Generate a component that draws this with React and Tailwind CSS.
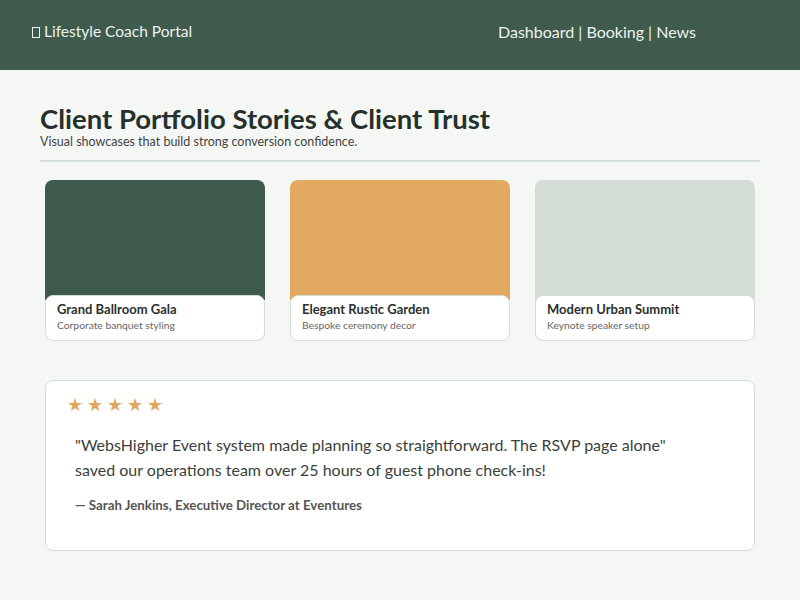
const showcases = [
  { title: "Grand Ballroom Gala", note: "Corporate banquet styling", swatch: "bg-[#3e5a4c]" },
  { title: "Elegant Rustic Garden", note: "Bespoke ceremony decor", swatch: "bg-[#e2aa60]" },
  { title: "Modern Urban Summit", note: "Keynote speaker setup", swatch: "bg-[#d3ddd5]" },
];

function ShowcaseCard({ title, note, swatch }) {
  return (
    <div className="flex flex-col">
      <div className={`h-[120px] rounded-t-lg ${swatch}`} />
      <div className="-mt-[5px] bg-white border border-[#d3ddd6] rounded-lg px-[11px] pt-[4px] pb-[8px]">
        <h3 className="text-[13px] font-bold text-[#2b302d] leading-[18px]">{title}</h3>
        <p className="text-[10.3px] text-[#666] leading-[14px]">{note}</p>
      </div>
    </div>
  );
}

export default function App() {
  return (
    <div className="min-h-[600px] bg-[#f5f7f5] font-['Lato',sans-serif]">
      <header className="h-[70px] bg-[#3f5b4d] flex items-center justify-between pl-8 pr-[104px] pb-[6px] text-[#eef2ef]">
        <div className="flex items-center text-[15.5px]">
          <span className="inline-block w-[8px] h-[11px] border border-[#eef2ef] mr-[4px]" />
          Lifestyle Coach Portal
        </div>
        <nav className="text-[16px]">Dashboard | Booking | News</nav>
      </header>

      <main className="px-10 pt-[34px]">
        <h1 className="text-[27.5px] font-bold text-[#26312b] leading-[30px]">
          Client Portfolio Stories &amp; Client Trust
        </h1>
        <p className="text-[12.5px] text-[#444] leading-[16px]">Visual showcases that build strong conversion confidence.</p>
        <div className="h-[2px] bg-[#d3ddd6] mt-[10px]" />

        <section className="grid grid-cols-3 gap-[25px] px-[5px] mt-[18px]">
          {showcases.map((s) => (
            <ShowcaseCard key={s.title} {...s} />
          ))}
        </section>

        <section className="mx-[5px] mt-[39px] h-[171px] bg-white border border-[#d3ddd6] rounded-lg pl-[21px] pt-[11px]">
          <div className="text-[#e0a85e] text-[18px] tracking-[4px] leading-[24px]">★★★★★</div>
          <blockquote className="ml-[8px] mt-[16px] text-[16px] text-[#3a3f3c] leading-[25px]">
            "WebsHigher Event system made planning so straightforward. The RSVP page alone"
            <br />
            saved our operations team over 25 hours of guest phone check-ins!
          </blockquote>
          <p className="ml-[8px] mt-[14px] text-[13.3px] font-bold text-[#555]">
            — Sarah Jenkins, Executive Director at Eventures
          </p>
        </section>
      </main>
    </div>
  );
}
